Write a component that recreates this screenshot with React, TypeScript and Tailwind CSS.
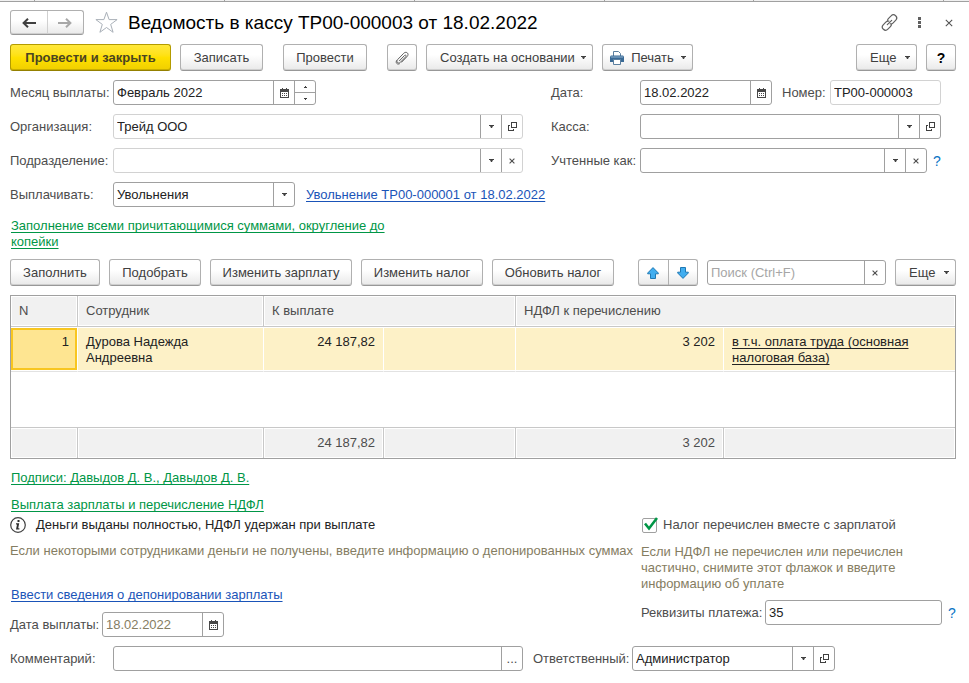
import React from "react";
import clsx from "clsx";

const green = "text-[#009646] underline decoration-1 underline-offset-2 [text-decoration-skip-ink:none]";
const blue = "text-[#1a54b8] underline decoration-1 underline-offset-2 [text-decoration-skip-ink:none]";

function Caret() {
  return (
    <svg width="5" height="3" viewBox="0 0 5 3" className="shrink-0" aria-hidden="true">
      <path d="M0 0h5v1H4L3 3H2L1 1H0z" fill="#404040" />
    </svg>
  );
}

function CalendarIcon() {
  return (
    <svg width="9" height="10" viewBox="0 0 9 10" shapeRendering="crispEdges" aria-hidden="true">
      <path d="M0 1h9v9H0z" fill="#484848" />
      <path d="M2 0h1v1H2zM6 0h1v1H6z" fill="#484848" />
      <path d="M1 4h7v5H1z" fill="#fff" />
      <path d="M2 5h1v1H2zM4 5h1v1H4zM6 5h1v1H6zM2 7h1v1H2zM4 7h1v1H4zM6 7h1v1H6z" fill="#484848" />
    </svg>
  );
}

function OpenIcon() {
  return (
    <svg width="9" height="9" viewBox="0 0 9 9" shapeRendering="crispEdges" fill="none" stroke="#404040" aria-hidden="true">
      <path d="M3.5 0.5h5v5h-5z" />
      <path d="M2 3.5H0.5v5h5V7" />
    </svg>
  );
}

function CrossIcon({ size = 6 }: { size?: number }) {
  return (
    <svg width={size} height={size} viewBox="0 0 7 7" stroke="#505050" aria-hidden="true">
      <path d="M0.7 0.7l5.6 5.6M6.3 0.7L0.7 6.3" strokeWidth={size > 7 ? 0.9 : 1.3} />
    </svg>
  );
}

function Field({ className, light, children }: { className?: string; light?: boolean; children: React.ReactNode }) {
  return (
    <div
      className={clsx(
        "flex h-[25px] min-w-0 overflow-hidden rounded-[3px] border bg-white",
        light ? "border-[#d2d2d2]" : "border-[#a0a0a0]",
        className,
      )}
    >
      {children}
    </div>
  );
}

function Part({ label, children }: { label: string; children: React.ReactNode }) {
  return (
    <button type="button" aria-label={label} className="flex w-[21px] shrink-0 items-center justify-center border-l border-[#a0a0a0]">
      {children}
    </button>
  );
}

const inputStyle = "h-full w-full min-w-0 flex-1 appearance-none bg-transparent pl-[3px] outline-none placeholder:text-[#a6a6a6]";

function Text({ id, value = "", muted, ...rest }: { id: string; value?: string; muted?: boolean; placeholder?: string; "aria-label"?: string }) {
  return <input id={id} type="text" defaultValue={value} className={clsx(inputStyle, muted ? "text-[#857d62]" : "text-[#222]")} {...rest} />;
}

function Choice({ id, value = "" }: { id: string; value?: string }) {
  return (
    <select id={id} defaultValue={value} className={clsx(inputStyle, "text-[#222]")}>
      <option value={value}>{value}</option>
    </select>
  );
}

function Label({ htmlFor, className, children }: { htmlFor: string; className?: string; children: React.ReactNode }) {
  return (
    <label htmlFor={htmlFor} className={clsx("shrink-0 whitespace-nowrap", className)}>
      {children}
    </label>
  );
}

const buttonFace = "rounded-[3px] border border-[#b0b0b0] border-b-[#989898] bg-linear-to-b from-white from-40% to-[#e9e9e9] text-[#404040] shadow-[inset_0_-1px_0_#cfcfcf]";

function Button({ className, primary, children, ...rest }: { className: string; primary?: boolean; children: React.ReactNode; "aria-label"?: string }) {
  return (
    <button
      type="button"
      className={clsx(
        "flex h-[27px] shrink-0 items-center whitespace-nowrap",
        primary
          ? "rounded-[3px] border border-[#b39b00] border-b-[#948000] bg-linear-to-b from-[#ffe83a] via-[#ffe000] to-[#f0cf00] font-bold text-[#4a4423] shadow-[inset_0_-1px_0_#c9ae00]"
          : buttonFace,
        className,
      )}
      {...rest}
    >
      {children}
    </button>
  );
}

function TabStrip() {
  return (
    <div className="flex h-[2px] border-b border-[#a0a0a0] bg-[#f0f0f0]" aria-hidden="true">
      <div className="w-[35px] border-r border-[#a0a0a0]" />
      <div className="w-[190px] border-r border-[#a0a0a0]" />
      <div className="w-[190px] border-r border-[#a0a0a0]" />
      <div className="w-[190px] border-r border-[#a0a0a0]" />
      <div className="w-[149px] border-r border-[#a0a0a0]" />
      <div className="w-[190px] border-r border-[#a0a0a0]" />
    </div>
  );
}

function Header() {
  return (
    <header className="mt-2 flex h-[25px] items-center">
      <div className={clsx("flex h-[25px] w-[74px] shrink-0", buttonFace)}>
        <button type="button" aria-label="Назад" className="flex flex-1 items-center justify-center border-r border-[#d0d0d0]">
          <svg width="14" height="10" viewBox="0 0 14 10" fill="none" stroke="#404040" strokeWidth="2">
            <path d="M14 5H2M6 0.8L1.6 5L6 9.2" />
          </svg>
        </button>
        <button type="button" aria-label="Вперед" className="flex flex-1 items-center justify-center">
          <svg width="14" height="10" viewBox="0 0 14 10" fill="none" stroke="#a8a8a8" strokeWidth="2">
            <path d="M0 5h12M8 0.8L12.4 5L8 9.2" />
          </svg>
        </button>
      </div>
      <button type="button" aria-label="Добавить в избранное" className="ml-[11px] shrink-0">
        <svg width="23" height="23" viewBox="0 0 23 23" fill="#fff" stroke="#a9b0b8">
          <path d="M11.5 1.2l2.6 7.4h8l-6.4 4.8 2.4 7.9-6.6-4.8-6.6 4.8 2.4-7.9L0.9 8.6h8z" />
        </svg>
      </button>
      <h1 className="ml-[10px] whitespace-nowrap text-[19px] leading-[24px] text-black">Ведомость в кассу ТР00-000003 от 18.02.2022</h1>
      <div className="ml-auto flex items-center pr-[3px]">
        <button type="button" aria-label="Получить ссылку">
          <svg width="17" height="17" viewBox="0 0 17 17" fill="none" stroke="#606060" strokeWidth="1.2" strokeLinecap="round">
            <path d="M6.500 6.300C6.700 5.500 7 5 7.600 4.400l2.500-2.500a3.100 3.100 0 0 1 4.700 4.300l-2.600 2.700c-0.900 0.900-2 1.200-3.100 0.900" />
            <path d="M10.500 10.700c-0.200 0.800-0.500 1.300-1.100 1.900l-2.500 2.500a3.100 3.100 0 0 1-4.700-4.300l2.600-2.700c0.900-0.900 2-1.200 3.100-0.900" />
            <path d="M6.300 10.700l4.400-4.400" />
          </svg>
        </button>
        <button type="button" aria-label="Дополнительные действия" className="ml-[20px]">
          <svg width="3" height="11" viewBox="0 0 3 11" fill="#606060">
            <path d="M0 0h3v3H0zM0 4h3v3H0zM0 8h3v3H0z" />
          </svg>
        </button>
        <button type="button" aria-label="Закрыть" className="ml-[24px]">
          <CrossIcon size={8} />
        </button>
      </div>
    </header>
  );
}

function Toolbar() {
  return (
    <div className="mt-[9px] flex gap-[9px]">
      <Button primary className="w-[161px] justify-center">Провести и закрыть</Button>
      <Button className="w-[83px] justify-center">Записать</Button>
      <Button className="ml-[11px] w-[84px] justify-center">Провести</Button>
      <Button className="ml-[11px] w-[30px] justify-center" aria-label="Присоединенные файлы">
        <svg width="14" height="14" viewBox="0 0 14 14" fill="none" stroke="#606060" strokeLinecap="round">
          <path d="M4.500 9.700l5-5.200c1-1.100 2.300 0.200 1.300 1.200L5.400 11.300c-2 2-4.800-0.600-2.800-2.700L8.700 2.300c2.600-2.600 6 0.500 3.400 3.200l-5.500 5.700" />
          <path d="M1.600 9.600c-1.400 2 0.400 4.300 2.700 3.300" />
        </svg>
      </Button>
      <Button className="w-[167px] justify-between pr-[6px] pl-[13px]">
        Создать на основании <Caret />
      </Button>
      <Button className="w-[91px] justify-between pr-[6px] pl-[7px]">
        <svg width="14" height="14" viewBox="0 0 14 14" aria-hidden="true">
          <path d="M3.500 5V0.500h5l2 2V5" fill="#fff" stroke="#5b7f9f" />
          <path d="M1 4.500h12l1 1V11H0V5.500z" fill="#3a6a96" />
          <path d="M1 6h12" stroke="#8fb2d0" />
          <path d="M3.500 8.500h7v5h-7z" fill="#fff" stroke="#5b7f9f" />
        </svg>
        Печать <Caret />
      </Button>
      <Button className="ml-auto w-[61px] justify-between pr-[6px] pl-[13px]">
        Еще <Caret />
      </Button>
      <Button className="w-[30px] justify-center font-bold" aria-label="Справка">
        <span className="text-[14px] text-black">?</span>
      </Button>
    </div>
  );
}

function Details() {
  return (
    <div className="mt-[9px] grid grid-cols-[541fr_405fr]">
      <div className="flex min-w-0 flex-col gap-[9px] pr-[28px]">
        <div className="flex items-center">
          <Label htmlFor="month" className="w-[103px]">Месяц выплаты:</Label>
          <Field className="w-[203px]">
            <Text id="month" value="Февраль 2022" />
            <Part label="Выбрать месяц"><CalendarIcon /></Part>
            <div className="flex w-[21px] shrink-0 flex-col border-l border-[#a0a0a0]">
              <button type="button" aria-label="Следующий месяц" className="flex flex-1 items-center justify-center border-b border-[#a0a0a0]">
                <svg width="3" height="2" viewBox="0 0 3 2"><path d="M1 0h1v1h1v1H0V1h1z" fill="#404040" /></svg>
              </button>
              <button type="button" aria-label="Предыдущий месяц" className="flex flex-1 items-center justify-center">
                <svg width="3" height="2" viewBox="0 0 3 2"><path d="M0 0h3v1H2v1H1V1H0z" fill="#404040" /></svg>
              </button>
            </div>
          </Field>
        </div>
        <div className="flex items-center">
          <Label htmlFor="company" className="w-[103px]">Организация:</Label>
          <Field light className="flex-1">
            <Choice id="company" value="Трейд ООО" />
            <Part label="Выбрать организацию"><Caret /></Part>
            <Part label="Открыть организацию"><OpenIcon /></Part>
          </Field>
        </div>
        <div className="flex items-center">
          <Label htmlFor="unit" className="w-[103px]">Подразделение:</Label>
          <Field light className="flex-1">
            <Choice id="unit" />
            <Part label="Выбрать подразделение"><Caret /></Part>
            <Part label="Очистить подразделение"><CrossIcon /></Part>
          </Field>
        </div>
        <div className="flex items-center">
          <Label htmlFor="kind" className="w-[103px]">Выплачивать:</Label>
          <Field className="w-[182px] shrink-0">
            <Choice id="kind" value="Увольнения" />
            <Part label="Выбрать вид выплаты"><Caret /></Part>
          </Field>
          <a href="#dismissal" className={clsx("ml-[11px] whitespace-nowrap", blue)}>Увольнение ТР00-000001 от 18.02.2022</a>
        </div>
      </div>
      <div className="flex min-w-0 flex-col gap-[9px] pr-[15px]">
        <div className="flex items-center">
          <Label htmlFor="date" className="w-[89px]">Дата:</Label>
          <Field className="w-[132px]">
            <Text id="date" value="18.02.2022" />
            <Part label="Выбрать дату"><CalendarIcon /></Part>
          </Field>
          <Label htmlFor="number" className="ml-[10px] w-[48px]">Номер:</Label>
          <Field light className="flex-1">
            <Text id="number" value="ТР00-000003" />
          </Field>
        </div>
        <div className="flex items-center">
          <Label htmlFor="desk" className="w-[89px]">Касса:</Label>
          <Field className="flex-1">
            <Choice id="desk" />
            <Part label="Выбрать кассу"><Caret /></Part>
            <Part label="Открыть кассу"><OpenIcon /></Part>
          </Field>
        </div>
        <div className="flex items-center">
          <Label htmlFor="recorded" className="w-[89px]">Учтенные как:</Label>
          <Field className="flex-1">
            <Choice id="recorded" />
            <Part label="Выбрать вариант учета"><Caret /></Part>
            <Part label="Очистить вариант учета"><CrossIcon /></Part>
          </Field>
          <button type="button" aria-label="Подсказка" className="ml-[6px] w-2 text-[14px] text-[#0a74c4]">?</button>
        </div>
      </div>
    </div>
  );
}

function ArrowIcon({ down }: { down?: boolean }) {
  return (
    <svg width="12" height="12" viewBox="0 0 12 12" className={clsx(down && "rotate-180")} aria-hidden="true">
      <path d="M6 0.600L11.300 6v0.800H8.500v4.700h-5V6.800H0.700V6z" fill="#41aef0" stroke="#1f79b4" />
    </svg>
  );
}

function TableToolbar() {
  return (
    <div className="mt-[9px] flex gap-[9px]">
      <Button className="w-[90px] justify-center">Заполнить</Button>
      <Button className="w-[92px] justify-center">Подобрать</Button>
      <Button className="w-[142px] justify-center">Изменить зарплату</Button>
      <Button className="w-[122px] justify-center">Изменить налог</Button>
      <Button className="w-[122px] justify-center">Обновить налог</Button>
      <div className={clsx("ml-[15px] flex h-[27px] w-[60px] shrink-0", buttonFace)}>
        <button type="button" aria-label="Переместить вверх" className="flex flex-1 items-center justify-center border-r border-[#b0b0b0]"><ArrowIcon /></button>
        <button type="button" aria-label="Переместить вниз" className="flex flex-1 items-center justify-center"><ArrowIcon down /></button>
      </div>
      <Field className="flex-1 self-center">
        <Text id="search" placeholder="Поиск (Ctrl+F)" aria-label="Поиск" />
        <Part label="Очистить поиск"><CrossIcon /></Part>
      </Field>
      <Button className="w-[61px] justify-between pr-[6px] pl-[13px]">
        Еще <Caret />
      </Button>
    </div>
  );
}

const headCell = "border-r border-b border-[#c8c8c8] bg-[#f1f1f1] px-2 text-left font-normal shadow-[inset_0_0_0_1px_#fff] last:border-r-0";
const bodyCell = "border-r border-r-white border-b border-b-[#e2e2e2] bg-[#fdf1c7] px-2 pt-[7px] align-top text-[#222] shadow-[inset_0_1px_0_#fff,inset_0_-1px_0_#fff] last:border-r-0";
const footCell = "border-t border-r border-[#c8c8c8] bg-[#f1f1f1] px-2 text-right shadow-[inset_0_0_0_1px_#fff] last:border-r-0";

function Employees() {
  return (
    <div className="mt-[9px] border border-[#a0a0a0]">
      <table className="w-full table-fixed border-separate border-spacing-0">
        <colgroup>
          <col className="w-[67px]" />
          <col className="w-[186px]" />
          <col className="w-[120px]" />
          <col className="w-[132px]" />
          <col className="w-[208px]" />
          <col />
        </colgroup>
        <thead>
          <tr className="h-[31px]">
            <th className={headCell}>N</th>
            <th className={headCell}>Сотрудник</th>
            <th colSpan={2} className={headCell}>К выплате</th>
            <th colSpan={2} className={headCell}>НДФЛ к перечислению</th>
          </tr>
        </thead>
        <tbody>
          <tr className="h-[45px]">
            <td className="border-r border-r-white border-b border-b-[#e2e2e2] px-0 py-px align-top text-[#222]">
              <div className="h-[42px] border-2 border-[#f8c620] bg-[#fee591] pt-1 pr-[6px] text-right">1</div>
            </td>
            <td className={bodyCell}>Дурова Надежда Андреевна</td>
            <td className={clsx(bodyCell, "text-right")}>24 187,82</td>
            <td className={bodyCell} />
            <td className={clsx(bodyCell, "text-right")}>3 202</td>
            <td className={bodyCell}>
              <a href="#tax-base" className="block w-[190px] underline decoration-1 underline-offset-2 [text-decoration-skip-ink:none]">
                в т.ч. оплата труда (основная налоговая база)
              </a>
            </td>
          </tr>
          <tr className="h-[55px]">
            <td colSpan={6} />
          </tr>
        </tbody>
        <tfoot>
          <tr className="h-[31px]">
            <td className={footCell} />
            <td className={footCell} />
            <td className={footCell}>24 187,82</td>
            <td className={footCell} />
            <td className={footCell}>3 202</td>
            <td className={footCell} />
          </tr>
        </tfoot>
      </table>
    </div>
  );
}

function Payment() {
  return (
    <div className="grid grid-cols-[631fr_315fr]">
      <div className="min-w-0">
        <p className="flex h-4 items-center whitespace-nowrap text-[#222]">
          <svg width="16" height="16" viewBox="0 0 16 16" className="mr-[10px] shrink-0" aria-hidden="true">
            <circle cx="8" cy="8" r="7.300" fill="#fff" stroke="#404040" strokeWidth="1.200" />
            <path d="M7.500 3h2v2h-2zM6 6.300h3.200l-1 5h1.200v1.200H6l1-5H6z" fill="#303030" />
          </svg>
          Деньги выданы полностью, НДФЛ удержан при выплате
        </p>
        <p className="mt-[10px] whitespace-nowrap text-[#857d62]">Если некоторыми сотрудниками деньги не получены, введите информацию о депонированных суммах</p>
        <p className="mt-7 pl-px">
          <a href="#deposit" className={blue}>Ввести сведения о депонировании зарплаты</a>
        </p>
        <div className="mt-[9px] flex items-center">
          <Label htmlFor="paid" className="w-[92px]">Дата выплаты:</Label>
          <Field className="w-[122px]">
            <Text id="paid" value="18.02.2022" muted />
            <Part label="Выбрать дату выплаты"><CalendarIcon /></Part>
          </Field>
        </div>
      </div>
      <div className="min-w-0">
        <label className="flex h-4 items-center whitespace-nowrap">
          <span className="relative mr-[5px] ml-px block h-[15px] w-4 shrink-0">
            <input type="checkbox" defaultChecked className="peer block h-[15px] w-[15px] appearance-none rounded-[2px] border border-[#a0a0a0] bg-white" />
            <svg width="14" height="14" viewBox="0 0 14 14" className="pointer-events-none invisible absolute -top-px left-[2px] peer-checked:visible" fill="none" stroke="#009646" strokeWidth="2.600" aria-hidden="true">
              <path d="M1 6.500l4 5L13 1" />
            </svg>
          </span>
          Налог перечислен вместе с зарплатой
        </label>
        <p className="mt-[11px] w-[280px] text-[#857d62]">Если НДФЛ не перечислен или перечислен частично, снимите этот флажок и введите информацию об уплате</p>
        <div className="mt-2 flex items-center">
          <Label htmlFor="details" className="w-[124px]">Реквизиты платежа:</Label>
          <Field className="flex-1">
            <Text id="details" value="35" />
          </Field>
          <button type="button" aria-label="Подсказка" className="ml-[6px] w-2 text-[14px] text-[#0a74c4]">?</button>
        </div>
      </div>
    </div>
  );
}

export default function App() {
  return (
    <div className="min-h-screen bg-white font-['Liberation_Sans',Arial,sans-serif] text-[13px] leading-4 text-[#4d4d4d]">
      <TabStrip />
      <main className="pr-[13px] pb-3 pl-[10px]">
        <Header />
        <Toolbar />
        <Details />
        <p className="mt-[11px] max-w-[400px] pl-px">
          <a href="#fill" className={green}>Заполнение всеми причитающимися суммами, округление до копейки</a>
        </p>
        <TableToolbar />
        <Employees />
        <p className="mt-[11px] pl-px">
          <a href="#signatures" className={green}>Подписи: Давыдов Д. В., Давыдов Д. В.</a>
        </p>
        <p className="mt-[11px] mb-1 pl-px">
          <a href="#payment" className={green}>Выплата зарплаты и перечисление НДФЛ</a>
        </p>
        <Payment />
        <div className="mt-[9px] flex items-center pr-[121px]">
          <Label htmlFor="comment" className="w-[103px]">Комментарий:</Label>
          <Field className="flex-1">
            <Text id="comment" />
            <Part label="Редактировать комментарий">...</Part>
          </Field>
          <Label htmlFor="manager" className="ml-[10px] w-[99px]">Ответственный:</Label>
          <Field className="w-[203px] shrink-0">
            <Choice id="manager" value="Администратор" />
            <Part label="Выбрать ответственного"><Caret /></Part>
            <Part label="Открыть ответственного"><OpenIcon /></Part>
          </Field>
        </div>
      </main>
    </div>
  );
}
